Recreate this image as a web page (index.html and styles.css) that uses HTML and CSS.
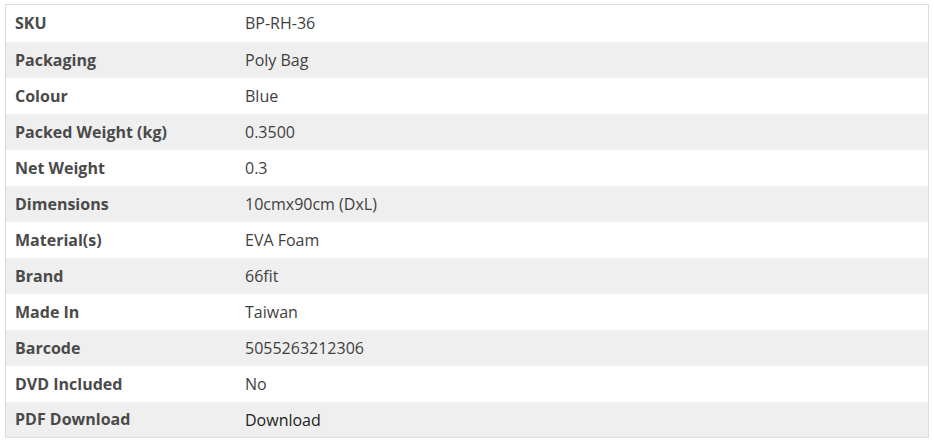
FILE: index.html
```html
<!DOCTYPE html>
<html>
<head>
    <meta charset="utf-8">
    <link rel="stylesheet" href="styles.css">
</head>
<body>
    <table class="specs">
        <tr><th>SKU</th><td>BP-RH-36</td></tr>
        <tr><th>Packaging</th><td>Poly Bag</td></tr>
        <tr><th>Colour</th><td>Blue</td></tr>
        <tr><th>Packed Weight (kg)</th><td>0.3500</td></tr>
        <tr><th>Net Weight</th><td>0.3</td></tr>
        <tr><th>Dimensions</th><td>10cmx90cm (DxL)</td></tr>
        <tr><th>Material(s)</th><td>EVA Foam</td></tr>
        <tr><th>Brand</th><td>66fit</td></tr>
        <tr><th>Made In</th><td>Taiwan</td></tr>
        <tr><th>Barcode</th><td>5055263212306</td></tr>
        <tr><th>DVD Included</th><td>No</td></tr>
        <tr><th>PDF Download</th><td><a class="dl" href="#">Download</a></td></tr>
    </table>
</body>
</html>
```
FILE: styles.css
```css
body {
    margin: 0;
    padding: 4px 5px;
    background: #fff;
    font-family: "Open Sans", "Liberation Sans", sans-serif;
    font-size: 16px;
}

/* spec table */

.specs {
    width: 924px;
    border-collapse: collapse;
    border: 1px solid #dcdcdc;
}

.specs tr {
    height: 36px;
}

.specs tr:first-child {
    height: 37px;
}

.specs tr:nth-child(even) {
    background-color: #efefef;
}

.specs th,
.specs td {
    padding: 0 9px;
    text-align: left;
    vertical-align: middle;
    line-height: 20px;
}

.specs th {
    width: 212px;
    font-weight: 700;
    color: #4a4a4a;
}

.specs td {
    color: #3f3f3f;
    font-weight: 400;
}

.dl {
    position: relative;
    top: 1px;
    color: #222;
    text-decoration: none;
}
```
